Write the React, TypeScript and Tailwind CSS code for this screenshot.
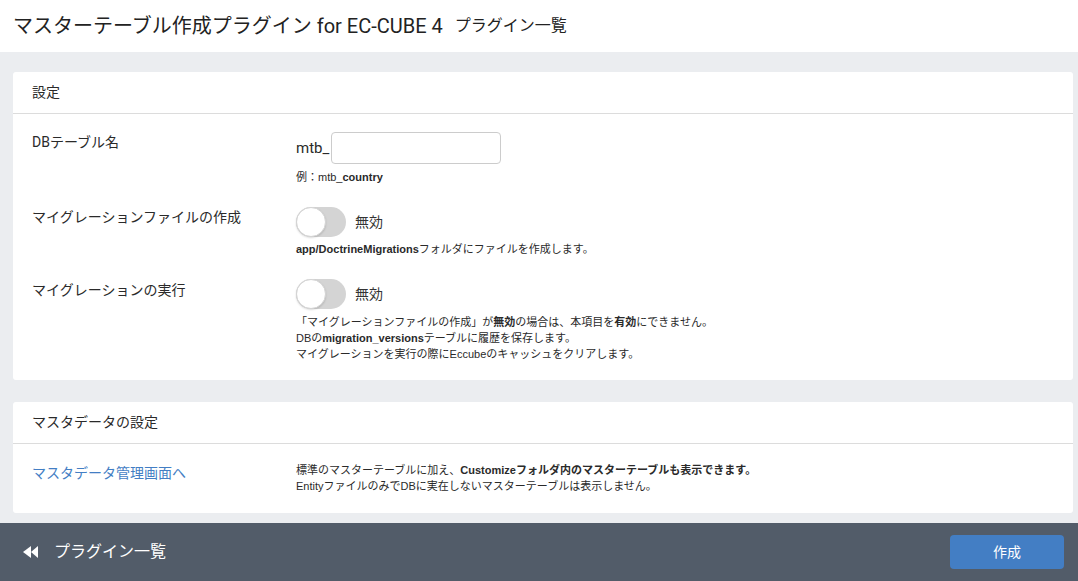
import React from "react";

const font = { fontFamily: "Roboto, 'Noto Sans CJK JP', sans-serif" };
const small = { fontFamily: "'Liberation Sans', 'Noto Sans CJK JP', sans-serif" };

function Toggle() {
  return (
    <div className="flex items-center">
      <div className="relative h-[30px] w-[50px] rounded-full bg-[#d4d4d4]">
        <div className="absolute left-0 top-0 h-[30px] w-[30px] rounded-full border border-[#d4d4d4] bg-white shadow-[0_1px_2px_rgba(0,0,0,0.15)]" />
      </div>
      <span className="ml-[9px] text-[14px] text-[#333]">無効</span>
    </div>
  );
}

export default function App() {
  return (
    <div className="flex h-[581px] w-[1078px] flex-col bg-[#ebedf0] text-[#2a2a2a]" style={font}>
      <header className="flex h-[52px] shrink-0 items-center bg-white px-[13px]">
        <h1 className="text-[20px] leading-none text-[#222]">マスターテーブル作成プラグイン for EC-CUBE 4</h1>
        <span className="ml-[12px] text-[16px] leading-none text-[#222]">プラグイン一覧</span>
      </header>

      <main className="flex flex-1 flex-col gap-[22px] pl-[13px] pr-[5px] pt-[20px]">
        <section className="rounded-[3px] bg-white">
          <div className="flex h-[42px] items-center border-b border-[#dcdcdc] px-[19px] text-[14px]">設定</div>
          <div className="flex flex-col gap-[22px] px-[19px] pb-[18px] pt-[18px]">
            <div className="flex">
              <div className="w-[264px] shrink-0 text-[14px] leading-[20px]">DBテーブル名</div>
              <div className="flex flex-col">
                <div className="flex items-center">
                  <span className="text-[15px]">mtb_</span>
                  <input className="ml-[2px] h-[32px] w-[170px] rounded-[4px] border border-[#ccc] bg-white px-2 outline-none" />
                </div>
                <div className="mt-[5px] text-[11px] leading-[16px]" style={small}>
                  例：mtb_<b>country</b>
                </div>
              </div>
            </div>

            <div className="flex">
              <div className="w-[264px] shrink-0 text-[14px] leading-[20px]">マイグレーションファイルの作成</div>
              <div className="flex flex-col">
                <Toggle />
                <div className="mt-[4px] text-[11px] leading-[16px]" style={small}>
                  <b>app/DoctrineMigrations</b>フォルダにファイルを作成します。
                </div>
              </div>
            </div>

            <div className="flex">
              <div className="w-[264px] shrink-0 pt-px text-[14px] leading-[20px]">マイグレーションの実行</div>
              <div className="flex flex-col">
                <Toggle />
                <div className="mt-[5px] text-[11px] leading-[16px]" style={small}>
                  <div>「マイグレーションファイルの作成」が<b>無効</b>の場合は、本項目を<b>有効</b>にできません。</div>
                  <div>DBの<b>migration_versions</b>テーブルに履歴を保存します。</div>
                  <div>マイグレーションを実行の際にEccubeのキャッシュをクリアします。</div>
                </div>
              </div>
            </div>
          </div>
        </section>

        <section className="rounded-[3px] bg-white">
          <div className="flex h-[42px] items-center border-b border-[#dcdcdc] px-[19px] text-[14px]">マスタデータの設定</div>
          <div className="flex px-[19px] pb-[19px] pt-[18px]">
            <div className="w-[264px] shrink-0 pt-px text-[14px] leading-[20px]">
              <a className="text-[#437ec4]">マスタデータ管理画面へ</a>
            </div>
            <div className="text-[11px] leading-[16px]" style={small}>
              <div>標準のマスターテーブルに加え、<b>Customizeフォルダ内のマスターテーブルも表示できます。</b></div>
              <div>EntityファイルのみでDBに実在しないマスターテーブルは表示しません。</div>
            </div>
          </div>
        </section>
      </main>

      <footer className="flex h-[58px] shrink-0 items-center justify-between bg-[#525c69] pl-[23px] pr-[14px]">
        <div className="flex items-center text-white">
          <svg width="16" height="12" viewBox="0 0 16 12" fill="white">
            <polygon points="0,6 8,0 8,12" />
            <polygon points="8,6 15,0 15,12" />
          </svg>
          <span className="ml-[15px] text-[16px]">プラグイン一覧</span>
        </div>
        <button className="h-[34px] w-[114px] rounded-[4px] bg-[#437ec4] text-[14px] text-white">作成</button>
      </footer>
    </div>
  );
}
